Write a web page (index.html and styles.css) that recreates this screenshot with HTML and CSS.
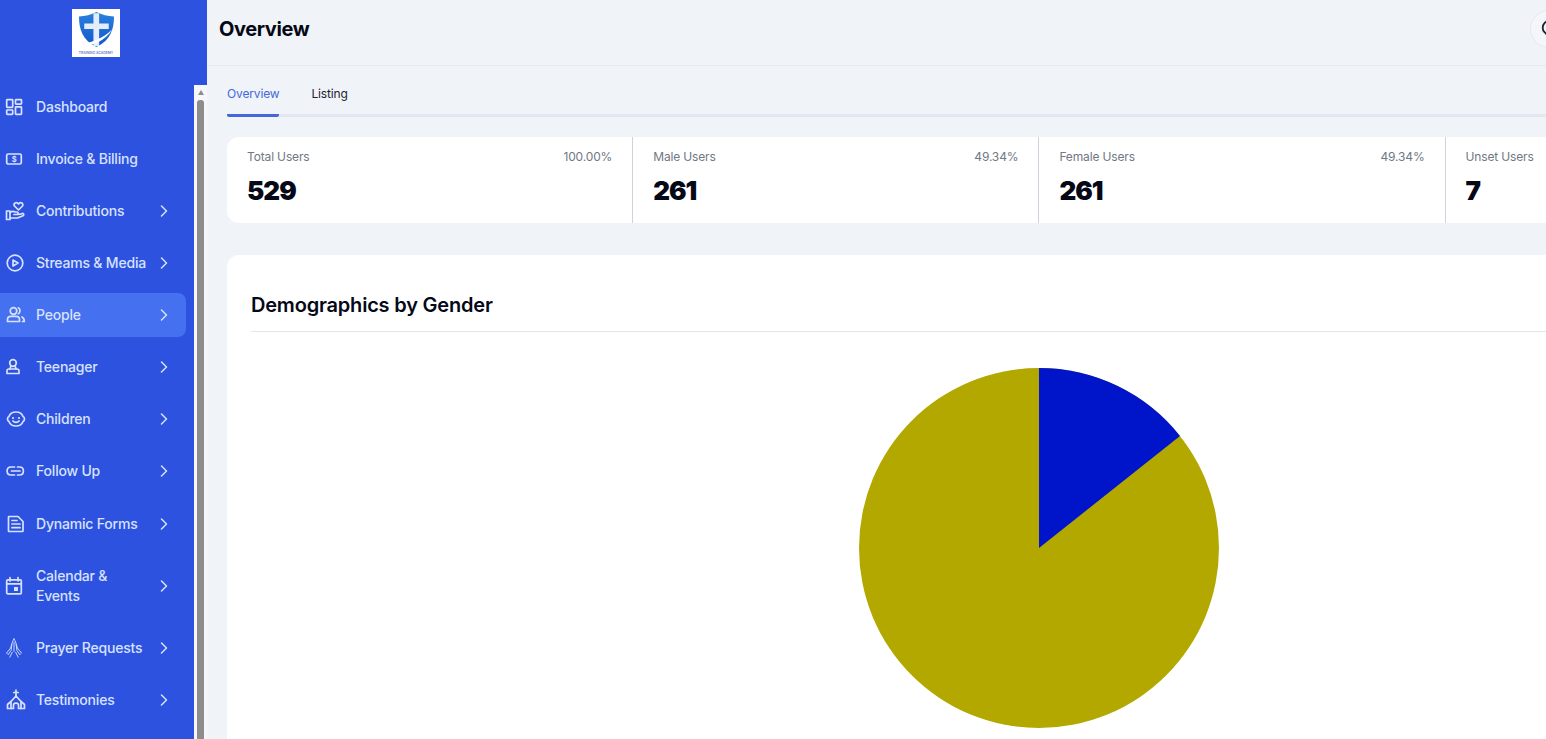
FILE: index.html
```html
<!DOCTYPE html>
<html lang="en">
<head>
<meta charset="UTF-8">
<meta name="viewport" content="width=device-width, initial-scale=1.0">
<title>Overview</title>
<link rel="stylesheet" href="styles.css">
</head>
<body>
<div class="app">
    <aside class="sidebar">
        <div class="brand">
            <div class="logo">
                <svg class="logo-mark" viewBox="0 0 40 40">
                    <defs>
                        <linearGradient id="shield" x1="0" y1="0" x2="0" y2="1">
                            <stop offset="0" stop-color="#2a80de"/>
                            <stop offset="1" stop-color="#1258c8"/>
                        </linearGradient>
                    </defs>
                    <path d="M20 0 C26 3 33 5 40 5 C40 20 36 32 20 40 C4 32 0 20 0 5 C7 5 14 3 20 0Z" fill="url(#shield)"/>
                    <path d="M16.500 1.500 H23 V13 H34 V19.500 H23 V39 H16.500 V19.500 H6 V13 H16.500Z" fill="#e4eefa"/>
                    <path d="M2 37 C14 35 28 30 38 20 C30 33 16 38 6 39Z" fill="#fff"/>
                </svg>
                <span class="logo-text">TRAINING ACADEMY</span>
            </div>
        </div>
        <div class="sidebar-body">
            <nav class="nav">
                <a class="nav-item">
                    <svg class="nav-icon" viewBox="0 0 20 20"><rect x="2.700" y="2.700" width="6" height="7.600" rx=".6"/><rect x="11.500" y="2.700" width="6" height="4.400" rx=".6"/><rect x="2.700" y="13" width="6" height="4.400" rx=".6"/><rect x="11.500" y="9.800" width="6" height="7.600" rx=".6"/></svg>
                    <span class="nav-label">Dashboard</span>
                </a>
                <a class="nav-item">
                    <svg class="nav-icon" viewBox="0 0 20 20"><rect x="2.700" y="5" width="14.600" height="10" rx="1.500"/><text class="icon-dollar" x="10" y="12.800" text-anchor="middle">$</text></svg>
                    <span class="nav-label">Invoice &amp; Billing</span>
                </a>
                <a class="nav-item">
                    <svg class="nav-icon" viewBox="0 0 20 20"><path d="M2.500 10 H6 V18.500 H2.500Z"/><path d="M6 11.500 C8 10 9.500 10 11 11 H13 C14.500 11 14.500 13.500 13 13.500 H10"/><path d="M6 17 H13.500 L19.500 14.500 C20.300 12.800 19 12 17.500 12.800 L14 13.500"/><path d="M14.500 9 L10.500 5 C9 2.500 12.500 0 14.500 3 C16.500 0 20 2.500 18.500 5Z"/></svg>
                    <span class="nav-label">Contributions</span>
                    <svg class="chevron" viewBox="0 0 8 12"><path d="M1.500 1 L6.500 6 L1.500 11"/></svg>
                </a>
                <a class="nav-item">
                    <svg class="nav-icon" viewBox="0 0 20 20"><circle cx="11" cy="10" r="7.800"/><path d="M9 7 L14 10 L9 13Z"/></svg>
                    <span class="nav-label">Streams &amp; Media</span>
                    <svg class="chevron" viewBox="0 0 8 12"><path d="M1.500 1 L6.500 6 L1.500 11"/></svg>
                </a>
                <a class="nav-item active">
                    <svg class="nav-icon" viewBox="0 0 20 20"><circle cx="9.500" cy="6" r="3.300"/><path d="M3.500 16.500 V14.500 C3.500 12.300 5 11.300 7 11.300 H12 C14 11.300 15.500 12.300 15.500 14.500 V16.500Z"/><path d="M14.300 2.800 C16.500 3.500 16.500 8 14.300 8.800"/><path d="M18 12 C19.800 13 20.300 15 20.300 16.500 H18.500"/></svg>
                    <span class="nav-label">People</span>
                    <svg class="chevron" viewBox="0 0 8 12"><path d="M1.500 1 L6.500 6 L1.500 11"/></svg>
                </a>
                <a class="nav-item">
                    <svg class="nav-icon" viewBox="0 0 20 20"><circle cx="9" cy="6" r="3.300"/><path d="M6.800 9 L6 12"/><path d="M11.200 9 L12 12"/><path d="M3 16.500 V14 C3 12.800 3.800 12 5 12 H13 C14.200 12 15 12.800 15 14 V16.500Z"/></svg>
                    <span class="nav-label">Teenager</span>
                    <svg class="chevron" viewBox="0 0 8 12"><path d="M1.500 1 L6.500 6 L1.500 11"/></svg>
                </a>
                <a class="nav-item">
                    <svg class="nav-icon" viewBox="0 0 20 20"><path d="M5 7.500 C6 4.500 8.500 3 12 3 C15.500 3 18 4.500 19 7.500 C21 8.300 21 11.700 19 12.500 C18 15.500 15.500 17 12 17 C8.500 17 6 15.500 5 12.500 C3 11.700 3 8.300 5 7.500Z"/><path d="M9 12 C10.500 13.800 13.500 13.800 15 12"/><circle class="icon-dot" cx="9" cy="9" r="1.100"/><circle class="icon-dot" cx="15" cy="9" r="1.100"/></svg>
                    <span class="nav-label">Children</span>
                    <svg class="chevron" viewBox="0 0 8 12"><path d="M1.500 1 L6.500 6 L1.500 11"/></svg>
                </a>
                <a class="nav-item">
                    <svg class="nav-icon" viewBox="0 0 20 20"><path d="M10.500 6 H7 C1.800 6 1.800 14 7 14 H10.500"/><path d="M13.500 6 H15.500 C20.700 6 20.700 14 15.500 14 H13.500"/><path d="M7.500 10 H16"/></svg>
                    <span class="nav-label">Follow Up</span>
                    <svg class="chevron" viewBox="0 0 8 12"><path d="M1.500 1 L6.500 6 L1.500 11"/></svg>
                </a>
                <a class="nav-item nav-item-gap">
                    <svg class="nav-icon" viewBox="0 0 20 20"><path d="M5 2.500 H14 L19 7.500 V17 C19 17.300 18.800 17.500 18.500 17.500 H5 C4.700 17.500 4.500 17.300 4.500 17 V3 C4.500 2.700 4.700 2.500 5 2.500Z"/><path d="M8 6.500 H13"/><path d="M8 10 H16"/><path d="M8 13.700 H16"/></svg>
                    <span class="nav-label">Dynamic Forms</span>
                    <svg class="chevron" viewBox="0 0 8 12"><path d="M1.500 1 L6.500 6 L1.500 11"/></svg>
                </a>
                <a class="nav-item nav-item-tall">
                    <svg class="nav-icon" viewBox="0 0 20 20"><rect x="2.700" y="3.800" width="14.600" height="14" rx="1"/><path d="M2.700 7.800 H17.300"/><path d="M6 1.500 V5"/><path d="M14 1.500 V5"/><rect class="icon-dot" x="10" y="11" width="4" height="4"/></svg>
                    <span class="nav-label">Calendar &amp; Events</span>
                    <svg class="chevron" viewBox="0 0 8 12"><path d="M1.500 1 L6.500 6 L1.500 11"/></svg>
                </a>
                <a class="nav-item">
                    <svg class="nav-icon nav-icon-thin" viewBox="0 0 22 24"><path d="M11 1 C9 4 8 8 7 12 L2 18 L3 19"/><path d="M11 1 C13 4 14 8 15 12 L20 18 L19 19"/><path d="M11 5 V16"/><path d="M8.500 7.500 L7.500 15 L4 20"/><path d="M13.500 7.500 L14.500 15 L18 20"/><path d="M9 17 L6 23"/><path d="M13 17 L16 23"/></svg>
                    <span class="nav-label">Prayer Requests</span>
                    <svg class="chevron" viewBox="0 0 8 12"><path d="M1.500 1 L6.500 6 L1.500 11"/></svg>
                </a>
                <a class="nav-item">
                    <svg class="nav-icon" viewBox="0 0 20 20"><path d="M12 0 V6"/><path d="M9.800 2.500 H14.200"/><path d="M12 6 L17 11.500 V18.500 H14.500 V15 C14.500 12.500 9.500 12.500 9.500 15 V18.500 H7 V11.500Z"/><path d="M7 11.500 L3.500 14.500 V18.500 H7"/><path d="M17 11.500 L20.500 14.500 V18.500 H17"/></svg>
                    <span class="nav-label">Testimonies</span>
                    <svg class="chevron" viewBox="0 0 8 12"><path d="M1.500 1 L6.500 6 L1.500 11"/></svg>
                </a>
            </nav>
            <div class="scrollbar">
                <span class="scroll-arrow"></span>
                <span class="scroll-thumb"></span>
            </div>
        </div>
    </aside>

    <main class="main">
        <div class="main-inner">
            <header class="topbar">
                <h1 class="page-title">Overview</h1>
                <div class="topbar-actions">
                    <button class="round-button">
                        <svg viewBox="0 0 20 20"><circle cx="10.500" cy="8.500" r="7.500"/><path d="M6.500 15 L10 19"/></svg>
                    </button>
                </div>
            </header>

            <div class="content">
                <div class="tabs">
                    <a class="tab active">Overview</a>
                    <a class="tab">Listing</a>
                </div>

                <section class="stats">
                    <div class="stat">
                        <div class="stat-head"><span>Total Users</span><span>100.00%</span></div>
                        <div class="stat-value">529</div>
                    </div>
                    <div class="stat">
                        <div class="stat-head"><span>Male Users</span><span>49.34%</span></div>
                        <div class="stat-value">261</div>
                    </div>
                    <div class="stat">
                        <div class="stat-head"><span>Female Users</span><span>49.34%</span></div>
                        <div class="stat-value">261</div>
                    </div>
                    <div class="stat">
                        <div class="stat-head"><span>Unset Users</span></div>
                        <div class="stat-value">7</div>
                    </div>
                </section>

                <section class="chart-card">
                    <h2 class="chart-title">Demographics by Gender</h2>
                    <div class="chart-body">
                        <svg class="pie" viewBox="0 0 360 360">
                            <circle cx="180" cy="180" r="180" fill="#b2a800"/>
                            <path d="M180 180 V0 A180 180 0 0 1 321 68Z" fill="#0015c9"/>
                        </svg>
                    </div>
                </section>
            </div>
        </div>
    </main>
</div>
</body>
</html>
```
FILE: styles.css
```css
* {
    box-sizing: border-box;
}

body {
    margin: 0;
    height: 100vh;
    overflow: hidden;
    font-family: "Inter", "Liberation Sans", sans-serif;
    background-color: #f0f3f8;
}

.app {
    display: flex;
    height: 100vh;
}

/* sidebar */
.sidebar {
    flex: 0 0 207px;
    display: flex;
    flex-direction: column;
    background-color: #2d52e0;
}

.brand {
    flex: 0 0 85px;
    display: flex;
    justify-content: center;
    padding: 9px 15px 0 0;
}

.logo {
    width: 48px;
    height: 48px;
    background-color: #fff;
    display: flex;
    flex-direction: column;
    align-items: center;
    padding-top: 2px;
}

.logo-mark {
    flex: 0 0 37px;
    width: 35px;
    height: 37px;
}

.logo-text {
    margin-top: 3px;
    font-size: 3.400px;
    line-height: 4px;
    font-weight: 600;
    color: #6a7cc4;
    white-space: nowrap;
}

.sidebar-body {
    flex: 1;
    min-height: 0;
    display: flex;
}

.nav {
    flex: 0 0 194px;
    display: flex;
    flex-direction: column;
    gap: 8px;
    padding-right: 8px;
}

.nav-item {
    flex: 0 0 44px;
    display: flex;
    align-items: center;
    gap: 12px;
    padding: 0 18px 0 4px;
    border-radius: 0 8px 8px 0;
    color: #d7e2ff;
    font-size: 14px;
    font-weight: 500;
    line-height: 20px;
    letter-spacing: -0.2px;
}

.nav-item-gap {
    margin-top: 1px;
}

.nav-item-tall {
    flex-basis: 64px;
}

.nav-item.active {
    background-color: #4570ef;
}

.nav-icon {
    flex: 0 0 20px;
    width: 20px;
    height: 20px;
    fill: none;
    stroke: #d7e2ff;
    stroke-width: 1.700;
    stroke-linecap: round;
    stroke-linejoin: round;
    overflow: visible;
}

.nav-icon-thin {
    stroke-width: 1.100;
}

.icon-dot {
    fill: #d7e2ff;
    stroke: none;
}

.icon-dollar {
    fill: #d7e2ff;
    stroke: none;
    font-size: 7.500px;
    font-weight: 700;
}

.nav-label {
    flex: 1;
}

.chevron {
    flex: 0 0 8px;
    width: 8px;
    height: 12px;
    fill: none;
    stroke: #d7e2ff;
    stroke-width: 1.500;
    stroke-linecap: round;
    stroke-linejoin: round;
}

.scrollbar {
    flex: 0 0 13px;
    background-color: #f6f7fa;
    padding: 0 3px;
    display: flex;
    flex-direction: column;
    align-items: stretch;
}

.scroll-arrow {
    align-self: center;
    margin-top: 5px;
    width: 0;
    height: 0;
    border-left: 3.500px solid transparent;
    border-right: 3.500px solid transparent;
    border-bottom: 5px solid #8f8c8c;
}

.scroll-thumb {
    flex: 1;
    margin-top: 5px;
    background-color: #8f8c8c;
    border-radius: 3px 3px 0 0;
}

/* main */
.main {
    flex: 1;
    min-width: 0;
    overflow: hidden;
}

.main-inner {
    width: 1664px;
}

.topbar {
    height: 66px;
    display: flex;
    align-items: center;
    justify-content: space-between;
    padding: 0 0 8px 12px;
    border-bottom: 1px solid #e5e9f1;
}

.page-title {
    margin: 0;
    font-size: 20px;
    font-weight: 700;
    letter-spacing: -0.4px;
    color: #050816;
}

.topbar-actions {
    width: 341px;
}

.round-button {
    display: block;
    width: 38px;
    height: 38px;
    padding: 9px;
    background-color: #f4f6fa;
    border: 1px solid #e5e9f1;
    border-radius: 50%;
}

.round-button svg {
    display: block;
    fill: none;
    stroke: #1c2230;
    stroke-width: 2;
}

.content {
    padding: 0 20px;
}

.tabs {
    height: 51px;
    display: flex;
    gap: 32px;
    border-bottom: 3px solid #e2e7f1;
}

.tab {
    height: 51px;
    padding-top: 20px;
    font-size: 12px;
    line-height: 16px;
    letter-spacing: -0.15px;
    color: #1c2230;
}

.tab.active {
    color: #4468dc;
    border-bottom: 3px solid #4468dc;
    border-radius: 0 0 2px 2px;
}

.stats {
    margin-top: 20px;
    display: grid;
    grid-template-columns: repeat(4, 406.200px);
    background-color: #fff;
    border-radius: 12px;
}

.stat {
    height: 86px;
    padding: 12px 20px 0;
    border-right: 1px solid #cdd3da;
}

.stat-head {
    display: flex;
    justify-content: space-between;
    font-size: 12px;
    line-height: 16px;
    letter-spacing: -0.15px;
    color: #6f7883;
}

.stat-value {
    margin-top: 7px;
    font-size: 26px;
    line-height: 38px;
    font-weight: 900;
    letter-spacing: -1px;
    color: #050816;
}

.chart-card {
    margin-top: 32px;
    padding: 0 24px;
    background-color: #fff;
    border-radius: 12px;
    height: 600px;
}

.chart-title {
    margin: 0;
    height: 77px;
    padding-top: 36px;
    font-size: 20px;
    line-height: 28px;
    font-weight: 600;
    letter-spacing: -0.2px;
    color: #050816;
    border-bottom: 1px solid #e2e5ea;
}

.chart-body {
    display: flex;
    justify-content: center;
    padding-top: 36px;
}

.pie {
    width: 360px;
    height: 360px;
}
```
